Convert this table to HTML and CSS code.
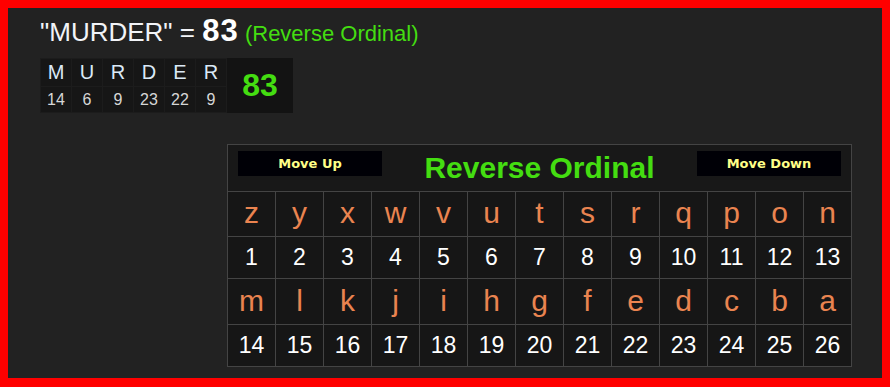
FILE: index.html
```html
<!DOCTYPE html>
<html>
<head>
<meta charset="utf-8">
<link rel="stylesheet" href="styles.css">
</head>
<body>
<div class="page">
  <div class="title">"MURDER" = <b class="total">83</b> <span class="cipher">(Reverse Ordinal)</span></div>
  <div class="breakdown">
    <div class="bl">M</div><div class="bl">U</div><div class="bl">R</div><div class="bl">D</div><div class="bl">E</div><div class="bl">R</div>
    <div class="bsum">83</div>
    <div class="bn">14</div><div class="bn">6</div><div class="bn">9</div><div class="bn">23</div><div class="bn">22</div><div class="bn">9</div>
  </div>
  <div class="chart-wrap">
    <div class="chart">
      <div class="head">
        <div class="btn">Move Up</div>
        <div class="chart-title">Reverse Ordinal</div>
        <div class="btn">Move Down</div>
      </div>
      <div class="l">z</div><div class="l">y</div><div class="l">x</div><div class="l">w</div><div class="l">v</div><div class="l">u</div><div class="l">t</div><div class="l">s</div><div class="l">r</div><div class="l">q</div><div class="l">p</div><div class="l">o</div><div class="l">n</div>
      <div class="n">1</div><div class="n">2</div><div class="n">3</div><div class="n">4</div><div class="n">5</div><div class="n">6</div><div class="n">7</div><div class="n">8</div><div class="n">9</div><div class="n">10</div><div class="n">11</div><div class="n">12</div><div class="n">13</div>
      <div class="l">m</div><div class="l">l</div><div class="l">k</div><div class="l">j</div><div class="l">i</div><div class="l">h</div><div class="l">g</div><div class="l">f</div><div class="l">e</div><div class="l">d</div><div class="l">c</div><div class="l">b</div><div class="l">a</div>
      <div class="n">14</div><div class="n">15</div><div class="n">16</div><div class="n">17</div><div class="n">18</div><div class="n">19</div><div class="n">20</div><div class="n">21</div><div class="n">22</div><div class="n">23</div><div class="n">24</div><div class="n">25</div><div class="n">26</div>
    </div>
  </div>
</div>
</body>
</html>
```
FILE: styles.css
```css
html {
  background: #ff0000;
  height: 100%;
}
body {
  margin: 8px;
  background: #222222;
  height: calc(100% - 17px);
  font-family: "Liberation Sans", Arial, sans-serif;
  color: #ffffff;
}
.page {
  padding: 8px 30px 0 32px;
}
.title {
  font-size: 26px;
  line-height: 32px;
  height: 32px;
  color: #f2f4f8;
  white-space: nowrap;
}
.total {
  font-size: 31px;
  line-height: 26px;
  font-weight: bold;
  letter-spacing: 1px;
  margin-right: -1px;
  color: #ffffff;
}
.cipher {
  font-size: 22px;
  line-height: 26px;
  color: #44dd11;
}
.breakdown {
  margin-top: 10px;
  display: grid;
  grid-template-columns: repeat(6, 30px) 65px;
  grid-template-rows: 27px 25px;
  gap: 1px;
  padding: 1px;
  background: #1c1c1c;
  width: max-content;
}
.bl, .bn {
  background: #161616;
  display: flex;
  align-items: center;
  justify-content: center;
}
.bl {
  font-size: 20px;
  color: #dbe9f6;
}
.bn {
  font-size: 16px;
  color: #d6d6d6;
}
.bsum {
  grid-column: 7;
  grid-row: 1 / span 2;
  margin: -1px -1px -1px 0;
  background: #131313;
  display: flex;
  align-items: center;
  justify-content: center;
  font-size: 32px;
  font-weight: bold;
  color: #44dd11;
}
.chart-wrap {
  display: flex;
  justify-content: flex-end;
  margin-top: 31px;
}
.chart {
  display: grid;
  grid-template-columns: repeat(13, 47px);
  grid-template-rows: 46px 44px 41px 45px 41px;
  gap: 1px;
  padding: 1px;
  background: #444444;
}
.head {
  grid-column: 1 / -1;
  background: #181818;
  display: flex;
  justify-content: space-between;
  align-items: flex-start;
  padding: 6px 10px 0 10px;
}
.btn {
  width: 144px;
  height: 25px;
  background: #000006;
  color: #ffff88;
  font-family: "DejaVu Sans", sans-serif;
  font-size: 13px;
  font-weight: bold;
  display: flex;
  align-items: center;
  justify-content: center;
}
.chart-title {
  align-self: center;
  margin-top: -6px;
  font-size: 30px;
  font-weight: bold;
  color: #44dd11;
}
.l, .n {
  background: #161616;
  display: flex;
  align-items: center;
  justify-content: center;
}
.l {
  font-size: 30px;
  color: #ea8450;
  padding-bottom: 2px;
}
.n {
  font-size: 23px;
  color: #ffffff;
}
```
